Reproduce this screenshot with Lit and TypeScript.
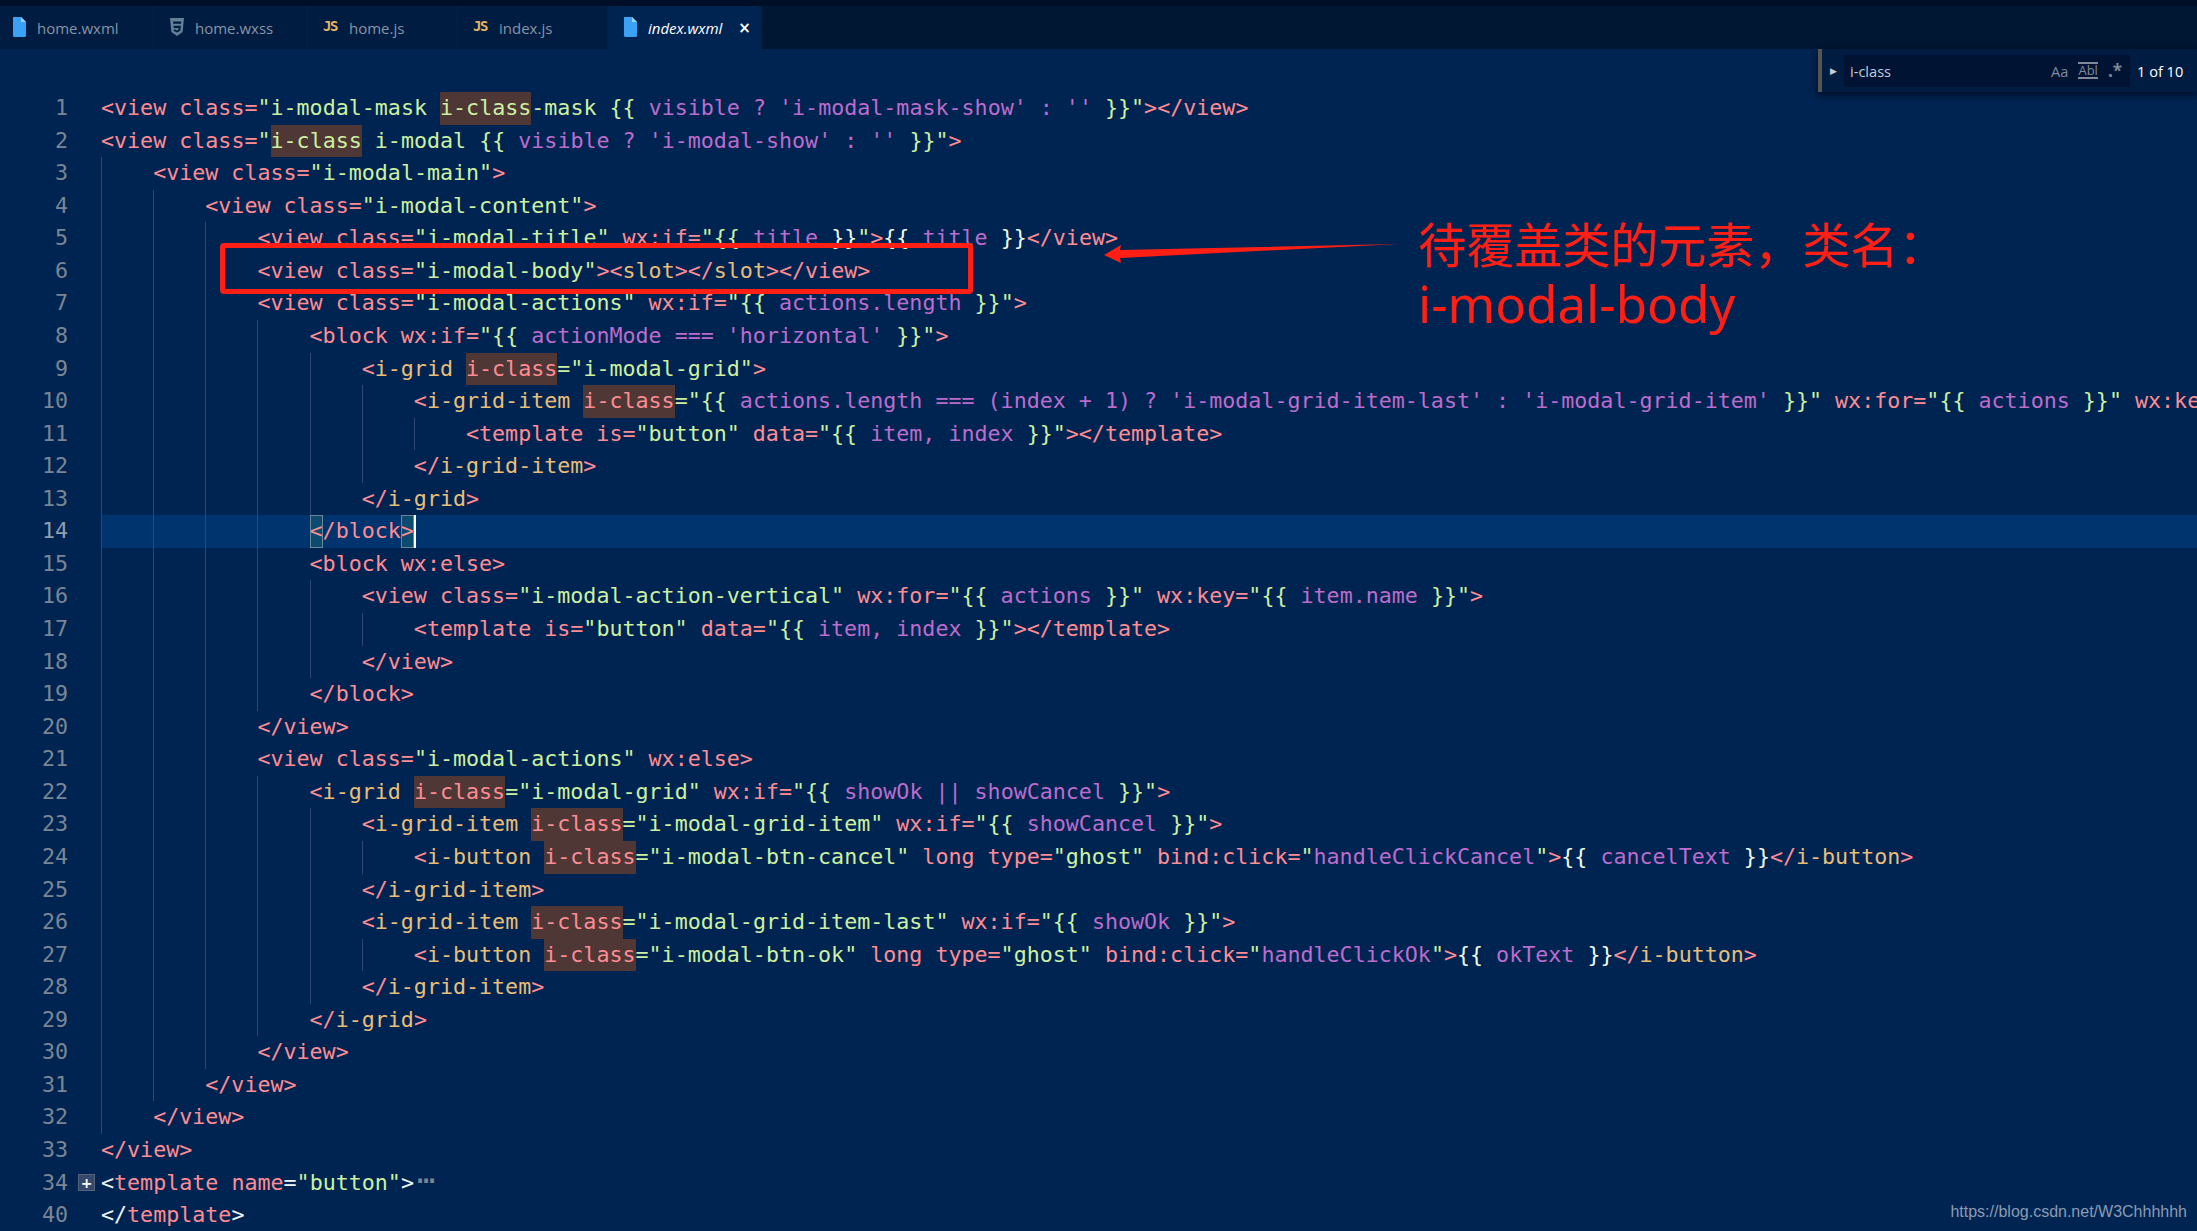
import { LitElement, html, css, svg } from "lit";
import { customElement } from "lit/decorators.js";

type Line = [number, number, string];

const LINES: Line[] = [
  [1, 0, `p<view class=¦g"i-modal-mask ¦Hi-class¦g-mask {{ ¦vvisible ? 'i-modal-mask-show' : '' ¦g}}"¦p></view>`],
  [2, 0, `p<view class=¦g"¦Hi-class¦g i-modal {{ ¦vvisible ? 'i-modal-show' : '' ¦g}}"¦p>`],
  [3, 1, `p<view class=¦g"i-modal-main"¦p>`],
  [4, 2, `p<view class=¦g"i-modal-content"¦p>`],
  [5, 3, `p<view class=¦g"i-modal-title"¦p wx:if=¦g"{{ ¦vtitle ¦b}}¦g"¦p>¦b{{ ¦vtitle ¦b}}¦p</view>`],
  [6, 3, `p<view class=¦g"i-modal-body"¦p><¦yslot¦p></¦yslot¦p></view>`],
  [7, 3, `p<view class=¦g"i-modal-actions"¦p wx:if=¦g"{{ ¦vactions.length ¦g}}"¦p>`],
  [8, 4, `p<block wx:if=¦g"{{ ¦vactionMode === 'horizontal' ¦g}}"¦p>`],
  [9, 5, `p<¦yi-grid ¦hi-class¦g="i-modal-grid"¦p>`],
  [10, 6, `p<¦yi-grid-item ¦hi-class¦g="{{ ¦vactions.length === (index + 1) ? 'i-modal-grid-item-last' : 'i-modal-grid-item' ¦g}}"¦p wx:for=¦g"{{ ¦vactions ¦g}}"¦p wx:key=¦g"{{ ¦vitem.name ¦g}}"¦p>`],
  [11, 7, `p<template is=¦g"button"¦p data=¦g"{{ ¦vitem, index ¦g}}"¦p></template>`],
  [12, 6, `p</¦yi-grid-item¦p>`],
  [13, 5, `p</¦yi-grid¦p>`],
  [14, 4, `m<¦p/block¦M>`],
  [15, 4, `p<block wx:else>`],
  [16, 5, `p<view class=¦g"i-modal-action-vertical"¦p wx:for=¦g"{{ ¦vactions ¦g}}"¦p wx:key=¦g"{{ ¦vitem.name ¦g}}"¦p>`],
  [17, 6, `p<template is=¦g"button"¦p data=¦g"{{ ¦vitem, index ¦g}}"¦p></template>`],
  [18, 5, `p</view>`],
  [19, 4, `p</block>`],
  [20, 3, `p</view>`],
  [21, 3, `p<view class=¦g"i-modal-actions"¦p wx:else>`],
  [22, 4, `p<¦yi-grid ¦hi-class¦g="i-modal-grid"¦p wx:if=¦g"{{ ¦vshowOk || showCancel ¦g}}"¦p>`],
  [23, 5, `p<¦yi-grid-item ¦hi-class¦g="i-modal-grid-item"¦p wx:if=¦g"{{ ¦vshowCancel ¦g}}"¦p>`],
  [24, 6, `p<¦yi-button ¦hi-class¦g="i-modal-btn-cancel"¦p long type=¦g"ghost"¦p bind:click=¦g"¦vhandleClickCancel¦g"¦p>¦b{{ ¦vcancelText ¦b}}¦p</¦yi-button¦p>`],
  [25, 5, `p</¦yi-grid-item¦p>`],
  [26, 5, `p<¦yi-grid-item ¦hi-class¦g="i-modal-grid-item-last"¦p wx:if=¦g"{{ ¦vshowOk ¦g}}"¦p>`],
  [27, 6, `p<¦yi-button ¦hi-class¦g="i-modal-btn-ok"¦p long type=¦g"ghost"¦p bind:click=¦g"¦vhandleClickOk¦g"¦p>¦b{{ ¦vokText ¦b}}¦p</¦yi-button¦p>`],
  [28, 5, `p</¦yi-grid-item¦p>`],
  [29, 4, `p</¦yi-grid¦p>`],
  [30, 3, `p</view>`],
  [31, 2, `p</view>`],
  [32, 1, `p</view>`],
  [33, 0, `p</view>`],
  [34, 0, `w<¦ptemplate name¦w=¦g"button"¦w>¦e⋯`],
  [40, 0, `w</¦ptemplate¦w>`],
];

const TABS = [
  { name: "home.wxml", icon: "file" },
  { name: "home.wxss", icon: "css" },
  { name: "home.js", icon: "js" },
  { name: "index.js", icon: "js" },
  { name: "index.wxml", icon: "file", active: true },
];

const fileIcon = svg`<svg class="ico" width="15" height="20" viewBox="0 0 15 20"><path d="M1 0h8l5 5v13.500a1.500 1.500 0 0 1-1.500 1.500h-10A1.500 1.500 0 0 1 1 18.500z" fill="#3aa1f4"/><path d="M9 0l5 5h-5z" fill="#9fd2fa"/></svg>`;
const cssIcon = svg`<svg class="ico" width="16" height="20" viewBox="0 0 16 20"><path d="M1 1h14l-1.400 14L8 19l-5.600-4z" fill="#5f8296"/><path d="M4 4.500h8.300l-.3 2.300H4.300zM4.600 8.800h7.200l-.5 5L8 15.400l-3.200-1.300-.1-1.700h2l.1.600 1.200.4 1.400-.5.100-1.900H4.800z" fill="#001a3d"/></svg>`;

@customElement("app-root")
export class AppRoot extends LitElement {
  static styles = css`
    :host {
      display: block;
      position: relative;
      height: 1231px;
      overflow: hidden;
      background: #002451;
    }
    .top {
      height: 6px;
      background: #000f28;
    }
    .tabs {
      display: grid;
      grid-template-columns: 154px 154px 150px 150px 154px 1fr;
      height: 43px;
      background: #001733;
      font: 15px "Open Sans", sans-serif;
      color: #8794a8;
    }
    .tab {
      display: flex;
      align-items: center;
      gap: 10px;
      padding-left: 15px;
      background: #001c40;
      border-right: 1px solid #0c2138;
    }
    .tab:first-child {
      padding-left: 12px;
    }
    .tab.active {
      background: #002451;
      color: #fff;
      font-style: italic;
    }
    .ico {
      flex: none;
      margin-top: -2px;
    }
    .js {
      flex: none;
      width: 16px;
      margin-top: -4px;
      font: bold 14px "DejaVu Sans Mono", monospace;
      letter-spacing: -1.500px;
      color: #e5b45f;
    }
    .close {
      margin-left: 6px;
      font: bold 15px "DejaVu Sans", sans-serif;
      font-style: normal;
      color: #fff;
    }
    .editor {
      padding-top: 43px;
      font: 21.67px "DejaVu Sans Mono", monospace;
      line-height: 32.57px;
      white-space: pre;
    }
    .line {
      display: flex;
      height: 32.57px;
    }
    .num {
      flex: none;
      width: 68px;
      text-align: right;
      color: #7b8694;
    }
    .line.cur .num {
      color: #939eab;
    }
    .gut {
      flex: none;
      width: 33px;
      display: flex;
      align-items: center;
      justify-content: center;
    }
    .foldbox {
      width: 15px;
      height: 15px;
      margin-left: 4px;
      border: 1px solid #55627a;
      background: #34476c;
      color: #fff;
      display: flex;
      align-items: center;
      justify-content: center;
      font: bold 14px/1 "DejaVu Sans", sans-serif;
    }
    .code {
      flex: 1;
      display: flex;
      min-width: 0;
    }
    .line.cur .code {
      background: #00346e;
    }
    .guide {
      flex: 0 0 4ch;
      box-sizing: border-box;
      border-left: 1px solid #2f4672;
    }
    .p { color: #ff8c93; }
    .y { color: #e8bd78; }
    .g { color: #cdf0a0; }
    .b { color: #f2fbe6; }
    .v { color: #bc6ccb; }
    .w { color: #f2f6fa; }
    .e {
      color: #7b8694;
      margin-left: 3px;
      font-size: 30px;
      line-height: 0;
    }
    .h, .H {
      display: inline-block;
      background: #4e3735;
    }
    .h { color: #ff8c93; }
    .H { color: #cdf0a0; }
    .m, .M {
      display: inline-block;
      box-sizing: border-box;
      color: #ff8c93;
      background: #0c4a70;
      outline: 1px solid #6b8796;
      outline-offset: -1px;
    }
    .M {
      box-shadow: 2px 0 0 #fff;
    }
    .box {
      position: absolute;
      left: 220px;
      top: 243px;
      width: 753px;
      height: 51px;
      box-sizing: border-box;
      border: 5px solid #ff1f14;
      border-radius: 4px;
    }
    .arrow {
      position: absolute;
      left: 1100px;
      top: 240px;
    }
    .note {
      position: absolute;
      left: 1418px;
      top: 212px;
      font: 48px/61px "Noto Sans CJK SC", sans-serif;
      color: #ff1f14;
      white-space: nowrap;
    }
    .note .latin {
      display: block;
      font-family: "Noto Sans", sans-serif;
      font-size: 51px;
    }
    .find {
      position: absolute;
      left: 1818px;
      top: 49px;
      right: 0;
      height: 43px;
      box-sizing: border-box;
      display: flex;
      align-items: center;
      border-left: 4px solid #555;
      background: #001c40;
      box-shadow: 0 2px 8px #00081a;
      font: 14.6px "Open Sans", sans-serif;
    }
    .tri {
      width: 22px;
      text-align: center;
      font-size: 9px;
      color: #c5cdd9;
    }
    .input {
      width: 286px;
      height: 32px;
      box-sizing: border-box;
      padding: 0 8px 0 6px;
      display: flex;
      align-items: center;
      background: #001333;
      color: #c5cdd9;
    }
    .opts {
      margin-left: auto;
      display: flex;
      align-items: center;
      gap: 10px;
      color: #7f8a99;
    }
    .abl {
      border-top: 2px solid #7f8a99;
      border-bottom: 2px solid #7f8a99;
      font-size: 13px;
      line-height: 13px;
    }
    .star {
      font-weight: 700;
      font-size: 17px;
      line-height: 17px;
    }
    .count {
      margin-left: 7px;
      color: #fff;
    }
    .mark {
      position: absolute;
      right: 10px;
      top: 1203px;
      font: 16px/18px "Liberation Sans", sans-serif;
      color: #8b9bb3;
    }
  `;

  private renderTokens(src: string) {
    return src.split("¦").map((seg) => html`<span class=${seg[0]}>${seg.slice(1)}</span>`);
  }

  private renderLine([n, depth, src]: Line) {
    return html`<div class="line ${n === 14 ? "cur" : ""}">
      <span class="num">${n}</span>
      <span class="gut">${n === 34 ? html`<span class="foldbox">+</span>` : ""}</span>
      <span class="code">
        ${Array.from({ length: depth }, () => html`<span class="guide"></span>`)}
        <span class="text">${this.renderTokens(src)}</span>
      </span>
    </div>`;
  }

  render() {
    return html`
      <div class="top"></div>
      <div class="tabs">
        ${TABS.map(
          (t) => html`<div class="tab ${t.active ? "active" : ""}">
            ${t.icon === "file" ? fileIcon : t.icon === "css" ? cssIcon : html`<span class="js">JS</span>`}
            <span>${t.name}</span>
            ${t.active ? html`<span class="close">×</span>` : ""}
          </div>`
        )}
        <div></div>
      </div>
      <div class="editor">${LINES.map((l) => this.renderLine(l))}</div>

      <div class="find">
        <span class="tri">▶</span>
        <div class="input">
          <span>i-class</span>
          <span class="opts"><span>Aa</span><span class="abl">Abl</span><span class="star">.*</span></span>
        </div>
        <span class="count">1 of 10</span>
      </div>

      <div class="box"></div>
      <svg class="arrow" width="300" height="26" viewBox="0 0 300 26">
        <path d="M298 4 L20 10 L21 5 L4 15 L21 23 L20 18 Z" fill="#ff1f14" />
      </svg>
      <div class="note">待覆盖类的元素，类名：<span class="latin">i-modal-body</span></div>
      <div class="mark">https://blog.csdn.net/W3Chhhhhh</div>
    `;
  }
}
